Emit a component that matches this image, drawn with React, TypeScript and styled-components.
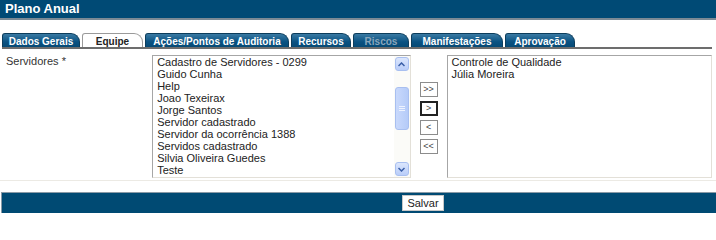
import React from 'react';
import styled, { createGlobalStyle } from 'styled-components';

const Global = createGlobalStyle`
  html, body { margin: 0; padding: 0; background: #fff; }
  body { font-family: "Liberation Sans", Arial, sans-serif; font-size: 11px; color: #333; }
`;

const Page = styled.div`
  width: 716px;
  height: 213px;
  display: flex;
  flex-direction: column;
  overflow: hidden;
`;

const Header = styled.div`
  height: 18px;
  background: #004a75;
  border-bottom: 2px solid #7b8a95;
  color: #fff;
  font-weight: bold;
  font-size: 13px;
  line-height: 18px;
  padding-left: 5px;
`;

const TabBar = styled.div`
  display: flex;
  align-items: flex-end;
  gap: 2px;
  margin: 13px 4px 0 2px;
  border-bottom: 2px solid #6d6d6d;
`;

const Tab = styled.div<{ $w: number; $active?: boolean; $disabled?: boolean }>`
  width: ${p => p.$w}px;
  box-sizing: border-box;
  height: 14px;
  line-height: 15px;
  font-weight: bold;
  font-size: 10px;
  white-space: nowrap;
  border-radius: 3px 9px 0 0;
  border: 1px solid ${p => (p.$active ? '#9a9a9a' : '#0c3d5c')};
  border-bottom: none;
  background: ${p => (p.$active ? '#fff' : 'linear-gradient(#3a7aa3, #0a5282 60%, #064a75)')};
  color: ${p => (p.$active ? '#222' : p.$disabled ? '#8aa6bb' : '#fff')};
  text-align: center;
`;

const FormRow = styled.div`
  display: flex;
  align-items: flex-start;
  padding: 6px 4px 0 6px;
  height: 125px;
  border-bottom: 1px solid #eceae4;
`;

const Label = styled.div`
  width: 147px;
  color: #333;
`;

const ListBox = styled.div<{ $width: number }>`
  width: ${p => p.$width}px;
  height: 121px;
  border: 1px solid #a6a6a6;
  border-right-color: #e3e0d8;
  border-bottom-color: #e3e0d8;
  display: flex;
  background: #fff;
`;

const Items = styled.ul`
  flex: 1;
  list-style: none;
  margin: 0;
  padding: 0 4px;
  color: #222;
  line-height: 12px;
  overflow: hidden;
  white-space: nowrap;
`;

const Scrollbar = styled.div`
  width: 16px;
  display: flex;
  flex-direction: column;
  align-items: center;
  background: #fbfbf8;
  padding: 1px 0;
`;

const ScrollBtn = styled.div`
  width: 14px;
  height: 14px;
  border-radius: 3px;
  background: linear-gradient(#dbe6fd, #b9cdf9);
  border: 1px solid #a8bff0;
  box-sizing: border-box;
  display: flex;
  align-items: center;
  justify-content: center;
`;

const Thumb = styled.div`
  width: 14px;
  height: 43px;
  margin-top: 16px;
  margin-bottom: auto;
  border-radius: 3px;
  background: linear-gradient(90deg, #c9d9fc, #b5cbf8);
  border: 1px solid #a8bff0;
  box-sizing: border-box;
  display: flex;
  align-items: center;
  justify-content: center;
`;

const Mover = styled.div`
  width: 36px;
  display: flex;
  flex-direction: column;
  align-items: center;
  gap: 4px;
  padding-top: 27px;
`;

const MoveBtn = styled.button<{ $focus?: boolean }>`
  width: 18px;
  height: 15px;
  padding: 0;
  background: #fff;
  border: ${p => (p.$focus ? '2px solid #222' : '1px solid #8c8c8c')};
  font-family: "Liberation Sans", Arial, sans-serif;
  font-size: 9px;
  color: #444;
  line-height: 11px;
`;

const Footer = styled.div`
  margin-top: 11px;
  height: 20px;
  background: #004a73;
  border-top: 1px solid #8a9aa6;
  border-left: 1px solid #8a9aa6;
  display: flex;
  justify-content: center;
  align-items: center;
  margin-left: 1px;
  padding-left: 128px;
`;

const SaveBtn = styled.button`
  height: 16px;
  padding: 0 4px;
  background: #fff;
  border: 1px solid #c8c8c8;
  font-family: "Liberation Sans", Arial, sans-serif;
  font-size: 11px;
  color: #222;
  line-height: 14px;
`;

const Chevron = ({ up }: { up?: boolean }) => (
  <svg width="7" height="5" viewBox="0 0 7 5">
    <path d={up ? 'M0.5 4L3.5 1L6.5 4' : 'M0.5 1L3.5 4L6.5 1'} stroke="#3a5fa8" strokeWidth="1.5" fill="none" />
  </svg>
);

const Grip = () => (
  <svg width="6" height="5" viewBox="0 0 6 5">
    <path d="M0 0.5H6M0 2.5H6M0 4.5H6" stroke="#eef3ff" strokeWidth="1" />
  </svg>
);

const tabs = [
  { label: 'Dados Gerais', w: 78 },
  { label: 'Equipe', w: 61, active: true },
  { label: 'Ações/Pontos de Auditoria', w: 144 },
  { label: 'Recursos', w: 60 },
  { label: 'Riscos', w: 56, disabled: true },
  { label: 'Manifestações', w: 92 },
  { label: 'Aprovação', w: 70 },
];

const available = [
  'Cadastro de Servidores - 0299',
  'Guido Cunha',
  'Help',
  'Joao Texeirax',
  'Jorge Santos',
  'Servidor cadastrado',
  'Servidor da ocorrência 1388',
  'Servidos cadastrado',
  'Silvia Oliveira Guedes',
  'Teste',
];

const selected = ['Controle de Qualidade', 'Júlia Moreira'];

export default function App() {
  return (
    <Page>
      <Global />
      <Header>Plano Anual</Header>
      <TabBar>
        {tabs.map(t => (
          <Tab key={t.label} $w={t.w} $active={t.active} $disabled={t.disabled}>
            {t.label}
          </Tab>
        ))}
      </TabBar>
      <FormRow>
        <Label>Servidores *</Label>
        <ListBox $width={258}>
          <Items>
            {available.map(n => (
              <li key={n}>{n}</li>
            ))}
          </Items>
          <Scrollbar>
            <ScrollBtn>
              <Chevron up />
            </ScrollBtn>
            <Thumb>
              <Grip />
            </Thumb>
            <ScrollBtn>
              <Chevron />
            </ScrollBtn>
          </Scrollbar>
        </ListBox>
        <Mover>
          <MoveBtn>&gt;&gt;</MoveBtn>
          <MoveBtn $focus>&gt;</MoveBtn>
          <MoveBtn>&lt;</MoveBtn>
          <MoveBtn>&lt;&lt;</MoveBtn>
        </Mover>
        <ListBox $width={265}>
          <Items>
            {selected.map(n => (
              <li key={n}>{n}</li>
            ))}
          </Items>
        </ListBox>
      </FormRow>
      <Footer>
        <SaveBtn>Salvar</SaveBtn>
      </Footer>
    </Page>
  );
}
